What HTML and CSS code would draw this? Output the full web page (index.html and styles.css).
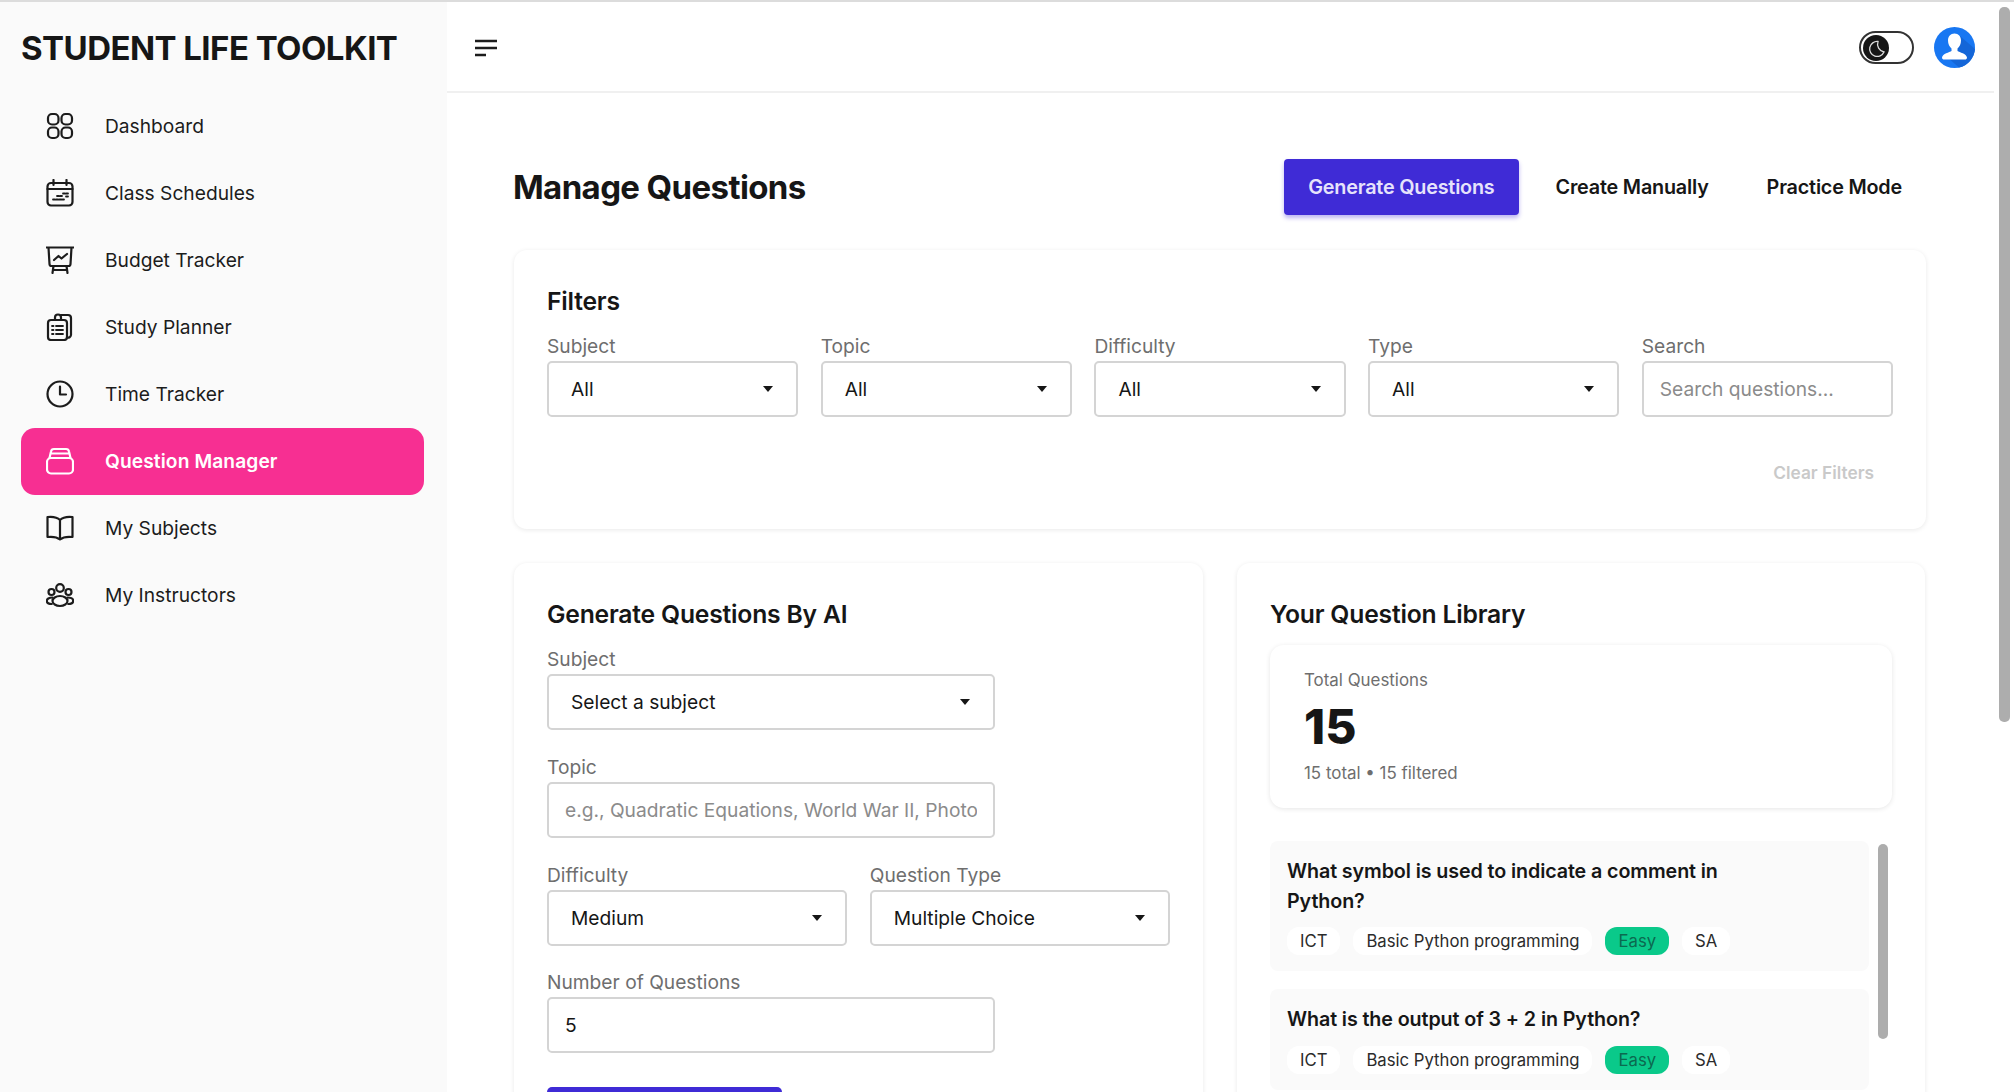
FILE: index.html
```html
<!DOCTYPE html>
<html lang="en">
<head>
<meta charset="UTF-8">
<meta name="viewport" content="width=device-width, initial-scale=1.0">
<title>Manage Questions</title>
<link rel="stylesheet" href="styles.css">
</head>
<body>
  <div class="app">
    <aside class="sidebar">
      <div class="brand">STUDENT LIFE TOOLKIT</div>
      <nav class="nav">
        <a class="nav-item">
          <svg class="nav-icon" viewBox="0 0 28 28"><rect x="2" y="2" width="10.5" height="10.5" rx="4"/><rect x="15.5" y="2" width="10.5" height="10.5" rx="4"/><rect x="2" y="15.5" width="10.5" height="10.5" rx="4"/><rect x="15.5" y="15.5" width="10.5" height="10.5" rx="4"/></svg>
          Dashboard
        </a>
        <a class="nav-item">
          <svg class="nav-icon" viewBox="0 0 28 28"><rect x="1.5" y="4" width="25" height="22.5" rx="3.5"/><path d="M1.5 10h25M7.5 1v5M20.5 1v5"/><path class="thin" stroke-dasharray="2 1.2" d="M7 20.5h11M11 17h5M17 14.5h5M20 17.5h2"/></svg>
          Class Schedules
        </a>
        <a class="nav-item">
          <svg class="nav-icon" viewBox="0 0 28 28"><path d="M0 1.5h28M2.5 1.5l1 16.5a2 2 0 0 0 2 2h17a2 2 0 0 0 2-2l1-16.5"/><path d="M8 14l4.500-4 3 2.500L21 8M7.500 20l-1 7M20.500 20l1 7M7 24h14"/></svg>
          Budget Tracker
        </a>
        <a class="nav-item">
          <svg class="nav-icon" viewBox="0 0 28 28"><rect x="2" y="7" width="19" height="20" rx="3"/><path d="M9 7V4.500a3 3 0 0 1 6 0V7M15 2h7a3 3 0 0 1 3 3v17a3 3 0 0 1-4 2.500"/><path class="thin" d="M10 13h7M10 17h7M10 21h7M6 13h1.500M6 17h1.500M6 21h1.500"/></svg>
          Study Planner
        </a>
        <a class="nav-item">
          <svg class="nav-icon" viewBox="0 0 28 28"><circle cx="14" cy="14" r="12.500"/><path d="M14 6.500V14.500h6"/></svg>
          Time Tracker
        </a>
        <a class="nav-item active">
          <svg class="nav-icon" viewBox="0 0 28 28"><rect x="1" y="11" width="26" height="15.500" rx="4"/><path d="M3.500 11l1.500-6.500a3 3 0 0 1 3-2.500h12a3 3 0 0 1 3 2.500L24.500 11M5 6.500h18"/></svg>
          Question Manager
        </a>
        <a class="nav-item">
          <svg class="nav-icon" viewBox="0 0 28 28"><path d="M14 6C11 3 6 2.500 1.500 3v20c4.500-.5 9.500 0 12.500 2.500C17 23 22 22.500 26.500 23V3C22 2.500 17 3 14 6zM14 6v19.500"/></svg>
          My Subjects
        </a>
        <a class="nav-item">
          <svg class="nav-icon" viewBox="0 0 28 28"><circle cx="14" cy="7" r="3.800"/><circle cx="5.500" cy="11" r="3"/><circle cx="22.500" cy="11" r="3"/><ellipse cx="14" cy="20" rx="7.500" ry="5"/><path d="M6.500 16.500C3 16.500.800 18 .800 19.800s2 3.200 5 3.200M21.500 16.500c3.500 0 5.700 1.500 5.700 3.300s-2 3.200-5 3.200"/></svg>
          My Instructors
        </a>
      </nav>
    </aside>

    <div class="main">
      <header class="topbar">
        <svg class="menu-icon" viewBox="0 0 22 18"><path d="M0 2h22M0 9h22M0 16h11"/></svg>
        <div class="topbar-right">
          <div class="toggle">
            <span class="toggle-knob">
              <svg viewBox="0 0 26 26"><path d="M15 6.500a7.500 7.500 0 1 0 6 10.500A8 8 0 0 1 15 6.500z"/></svg>
            </span>
          </div>
          <svg class="avatar" viewBox="0 0 41 41">
            <circle cx="20.500" cy="20.500" r="20.500" fill="#1877f2"/>
            <path d="M26 9l15 13a20.500 20.500 0 0 1-16 18.500L13 30z" fill="#1466d8"/>
            <path d="M20.500 6.500c4 0 6.500 3 6.500 7 0 3.500-1.500 6.500-3.500 8v2.500c2 1.500 9 2.500 9.500 6.500 0 1.500-1 2-2 2h-21c-1 0-2-.5-2-2 .5-4 7.500-5 9.500-6.500v-2.500c-2-1.500-3.500-4.500-3.500-8 0-4 2.500-7 6.500-7z" fill="#fff"/>
          </svg>
        </div>
      </header>

      <main class="content">
        <div class="page-head">
          <h1>Manage Questions</h1>
          <div class="tabs">
            <button class="tab tab-active">Generate Questions</button>
            <button class="tab">Create Manually</button>
            <button class="tab">Practice Mode</button>
          </div>
        </div>

        <section class="card filters">
          <h2>Filters</h2>
          <div class="filter-grid">
            <div class="field">
              <label>Subject</label>
              <div class="select">All<span class="caret"></span></div>
            </div>
            <div class="field">
              <label>Topic</label>
              <div class="select">All<span class="caret"></span></div>
            </div>
            <div class="field">
              <label>Difficulty</label>
              <div class="select">All<span class="caret"></span></div>
            </div>
            <div class="field">
              <label>Type</label>
              <div class="select">All<span class="caret"></span></div>
            </div>
            <div class="field">
              <label>Search</label>
              <input class="input" type="text" placeholder="Search questions...">
            </div>
          </div>
          <div class="clear-row"><span class="clear">Clear Filters</span></div>
        </section>

        <div class="columns">
          <section class="card">
            <h2>Generate Questions By AI</h2>
            <div class="field narrow">
              <label>Subject</label>
              <div class="select">Select a subject<span class="caret"></span></div>
            </div>
            <div class="field narrow">
              <label>Topic</label>
              <input class="input" type="text" placeholder="e.g., Quadratic Equations, World War II, Photosynthesis">
            </div>
            <div class="field-row">
              <div class="field">
                <label>Difficulty</label>
                <div class="select">Medium<span class="caret"></span></div>
              </div>
              <div class="field">
                <label>Question Type</label>
                <div class="select">Multiple Choice<span class="caret"></span></div>
              </div>
            </div>
            <div class="field narrow">
              <label>Number of Questions</label>
              <input class="input" type="text" value="5">
            </div>
            <button class="generate">Generate Questions</button>
          </section>

          <section class="card">
            <h2>Your Question Library</h2>
            <div class="stat">
              <div class="stat-label">Total Questions</div>
              <div class="stat-value">15</div>
              <div class="stat-note">15 total • 15 filtered</div>
            </div>
            <div class="question-list">
              <div class="question">
                <div class="question-title">What symbol is used to indicate a comment in Python?</div>
                <div class="tags">
                  <span class="tag">ICT</span>
                  <span class="tag">Basic Python programming</span>
                  <span class="tag tag-easy">Easy</span>
                  <span class="tag">SA</span>
                </div>
              </div>
              <div class="question">
                <div class="question-title">What is the output of 3 + 2 in Python?</div>
                <div class="tags">
                  <span class="tag">ICT</span>
                  <span class="tag">Basic Python programming</span>
                  <span class="tag tag-easy">Easy</span>
                  <span class="tag">SA</span>
                </div>
              </div>
              <div class="list-thumb"></div>
            </div>
          </section>
        </div>
      </main>
    </div>
  </div>
  <div class="page-thumb"></div>
</body>
</html>
```

FILE: styles.css
```css
* {
  box-sizing: border-box;
}

html, body {
  height: 100%;
}

body {
  margin: 0;
  overflow: hidden;
  background-color: #fff;
  color: #161616;
  font-family: Inter, "Liberation Sans", sans-serif;
}

.app {
  display: flex;
  height: 100vh;
  padding-right: 20px;
  border-top: 2px solid #dcdcdc;
}

/* sidebar */
.sidebar {
  flex: 0 0 447px;
  padding: 0 23px 0 21px;
  background-color: #fafafa;
}

.brand {
  margin-top: 23px;
  font-size: 33px;
  line-height: 46px;
  font-weight: 700;
  letter-spacing: -0.55px;
  white-space: nowrap;
}

.nav {
  margin-top: 22px;
}

.nav-item {
  display: flex;
  align-items: center;
  gap: 31px;
  height: 67px;
  padding: 0 0 2px 25px;
  border-radius: 14px;
  font-size: 19.200px;
  color: #1c1c1c;
}

.nav-item.active {
  background-color: #f72f92;
  color: #fff;
  font-weight: 600;
  letter-spacing: 0.1px;
}

.nav-icon {
  flex: 0 0 28px;
  width: 28px;
  height: 28px;
  fill: none;
  stroke: currentColor;
  stroke-width: 2.2;
  stroke-linecap: round;
  stroke-linejoin: round;
}

.nav-icon .thin {
  stroke-width: 1.8;
}

/* header */
.main {
  flex: 1;
  min-width: 0;
  display: flex;
  flex-direction: column;
}

.topbar {
  flex: 0 0 91px;
  display: flex;
  align-items: center;
  justify-content: space-between;
  padding: 2px 19px 0 28px;
  border-bottom: 2px solid #f0f0f0;
}

.menu-icon {
  width: 22px;
  height: 18px;
  fill: none;
  stroke: #1c1c1c;
  stroke-width: 2.5;
}

.topbar-right {
  display: flex;
  align-items: center;
  gap: 20px;
}

.toggle {
  display: flex;
  align-items: center;
  width: 55px;
  height: 33px;
  padding-left: 2px;
  border: 2px solid #333;
  border-radius: 17px;
}

.toggle-knob {
  display: block;
  width: 26px;
  height: 26px;
  border-radius: 50%;
  background-color: #161616;
}

.toggle-knob svg {
  display: block;
  width: 26px;
  height: 26px;
  fill: none;
  stroke: #ddd;
  stroke-width: 1.3;
}

.avatar {
  width: 41px;
  height: 41px;
}

/* content */
.content {
  flex: 1;
  min-height: 0;
  overflow: hidden;
  padding: 66px 68px 0 67px;
}

.page-head {
  display: flex;
  align-items: center;
  justify-content: space-between;
  height: 56px;
  margin-bottom: 35px;
}

h1 {
  margin: 0 0 0 -1px;
  font-size: 33px;
  font-weight: 700;
  letter-spacing: -0.62px;
}

.tabs {
  display: flex;
  gap: 10px;
}

.tab {
  height: 56px;
  padding: 0 24px;
  border: 0;
  border-radius: 4px;
  background: none;
  color: #161616;
  font-family: inherit;
  font-size: 19.800px;
  font-weight: 600;
  letter-spacing: -0.2px;
}

.tab-active {
  margin-right: 3px;
  background-color: #3f2bd6;
  color: #e6e3fb;
  box-shadow: 0 3px 4px rgba(63, 43, 214, 0.35);
}

.card {
  padding: 33px;
  border-radius: 13px;
  background-color: #fff;
  box-shadow: 0 1px 5px rgba(0, 0, 0, 0.09);
}

h2 {
  margin: 0;
  font-size: 24.700px;
  line-height: 36px;
  font-weight: 600;
  letter-spacing: -0.2px;
}

.filters {
  height: 279px;
  margin-bottom: 34px;
}

.filter-grid {
  display: grid;
  grid-template-columns: repeat(5, 1fr);
  gap: 22.500px;
  margin-top: 14px;
}

.field label {
  display: block;
  margin-bottom: 2px;
  color: #6e6e6e;
  font-size: 19.200px;
  line-height: 26px;
}

.select, .input {
  display: flex;
  align-items: center;
  justify-content: space-between;
  width: 100%;
  height: 56px;
  border: 2px solid #d4d4d4;
  border-radius: 5px;
  background-color: #fff;
  color: #161616;
  font-family: inherit;
  font-size: 19.200px;
}

.select {
  padding: 0 23px 0 22px;
}

.input {
  padding: 0 16px;
  outline: none;
}

.input::placeholder {
  color: #8b8b8b;
}

.caret {
  width: 0;
  height: 0;
  border-left: 5.500px solid transparent;
  border-right: 5.500px solid transparent;
  border-top: 6px solid #161616;
}

.clear-row {
  display: flex;
  justify-content: flex-end;
  margin-top: 44px;
  padding-right: 19px;
}

.clear {
  color: #c9c9c9;
  font-size: 17.300px;
  line-height: 24px;
  font-weight: 600;
}

.columns {
  display: grid;
  grid-template-columns: 689px 688px;
  gap: 34px;
}

.field {
  margin-top: 14px;
}

.field + .field {
  margin-top: 24px;
}

.field-row + .field {
  margin-top: 23px;
}

.filter-grid .field {
  margin-top: 0;
}

.narrow {
  width: 448px;
}

.field-row {
  display: grid;
  grid-template-columns: 1fr 1fr;
  gap: 22.500px;
  margin-top: 24px;
}

.field-row .field {
  margin-top: 0;
}

.generate {
  display: block;
  width: 235px;
  height: 56px;
  margin-top: 34px;
  border: 0;
  border-radius: 5px;
  background-color: #3f2bd6;
  color: #fff;
  font-family: inherit;
  font-size: 20px;
}

.stat {
  margin-top: 13px;
  padding: 23px 34px;
  border-radius: 14px;
  box-shadow: 0 1px 5px rgba(0, 0, 0, 0.1);
}

.stat-label, .stat-note {
  color: #6e6e6e;
  font-size: 16.900px;
  line-height: 24px;
}

.stat-value {
  margin: 6px 0 5px;
  font-size: 48px;
  line-height: 58px;
  font-weight: 800;
}

.question-list {
  position: relative;
  margin-top: 33px;
}

.question {
  width: 599px;
  margin-bottom: 18px;
  padding: 16px 17px 16px;
  border-radius: 8px;
  background-color: #fafafa;
}

.question-title {
  max-width: 470px;
  font-size: 19.700px;
  line-height: 29.500px;
  font-weight: 600;
  letter-spacing: -0.1px;
}

.tags {
  display: flex;
  gap: 13px;
  margin-top: 11px;
}

.tag {
  display: block;
  height: 28px;
  padding: 0 13px;
  border-radius: 12px;
  background-color: #fff;
  color: #2b2b2b;
  font-size: 16.700px;
  line-height: 28px;
}

.tag-easy {
  background-color: #0ac98a;
  color: #0b6a50;
}

/* scrollbars lying over the content */
.list-thumb {
  position: absolute;
  top: 3px;
  left: 608px;
  width: 10px;
  height: 195px;
  border-radius: 5px;
  background-color: #adadad;
}

.page-thumb {
  position: absolute;
  top: 7px;
  right: 4px;
  width: 11px;
  height: 715px;
  border-radius: 5px;
  background-color: #adadad;
}
```
